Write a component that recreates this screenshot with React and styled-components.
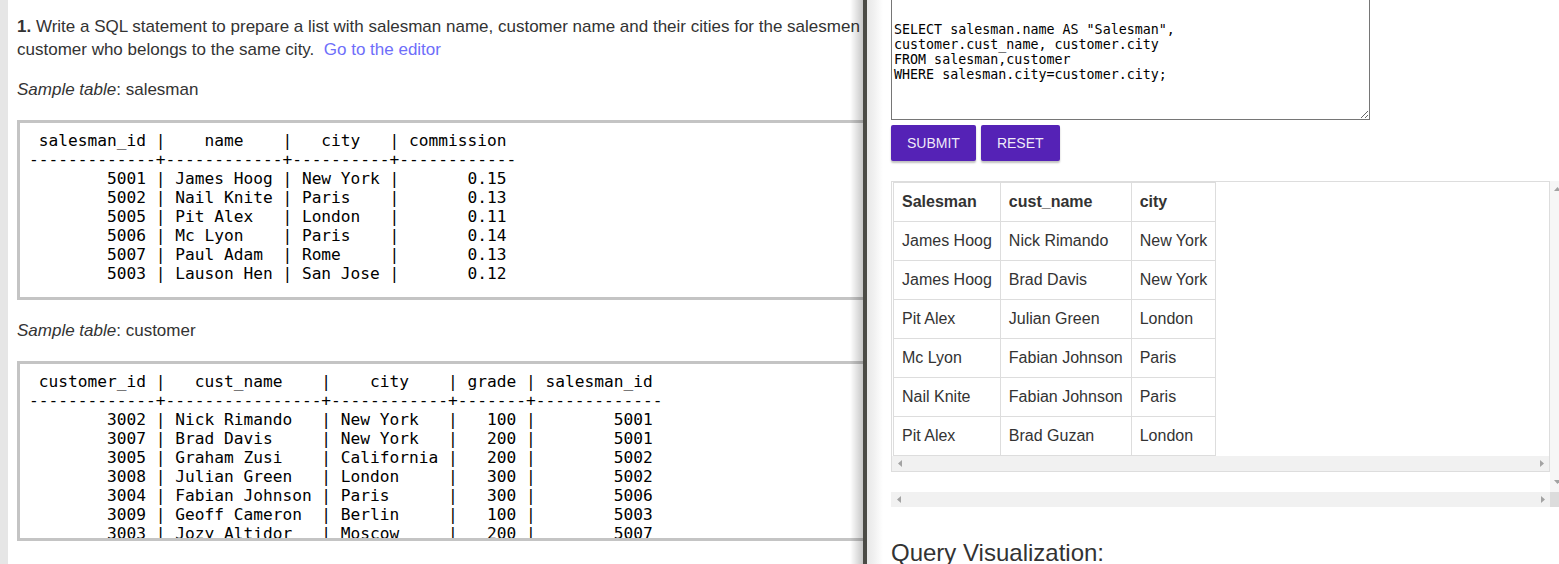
import React from 'react'
import styled, { createGlobalStyle } from 'styled-components'

const GlobalStyle = createGlobalStyle`
  html, body {
    margin: 0;
    padding: 0;
    height: 100%;
    overflow: hidden;
  }
  body {
    background: #e6e6e6;
    font-family: "Liberation Sans", Arial, sans-serif;
  }
`

const salesmanTable = ` salesman_id |    name    |   city   | commission
-------------+------------+----------+------------
        5001 | James Hoog | New York |       0.15
        5002 | Nail Knite | Paris    |       0.13
        5005 | Pit Alex   | London   |       0.11
        5006 | Mc Lyon    | Paris    |       0.14
        5007 | Paul Adam  | Rome     |       0.13
        5003 | Lauson Hen | San Jose |       0.12`

const customerTable = ` customer_id |   cust_name    |    city    | grade | salesman_id
-------------+----------------+------------+-------+-------------
        3002 | Nick Rimando   | New York   |   100 |        5001
        3007 | Brad Davis     | New York   |   200 |        5001
        3005 | Graham Zusi    | California |   200 |        5002
        3008 | Julian Green   | London     |   300 |        5002
        3004 | Fabian Johnson | Paris      |   300 |        5006
        3009 | Geoff Cameron  | Berlin     |   100 |        5003
        3003 | Jozy Altidor   | Moscow     |   200 |        5007
        3001 | Brad Guzan     | London     |       |        5005`

const query = `SELECT salesman.name AS "Salesman",
customer.cust_name, customer.city
FROM salesman,customer
WHERE salesman.city=customer.city;`

const columns = ['Salesman', 'cust_name', 'city']
const rows = [
    ['James Hoog', 'Nick Rimando', 'New York'],
    ['James Hoog', 'Brad Davis', 'New York'],
    ['Pit Alex', 'Julian Green', 'London'],
    ['Mc Lyon', 'Fabian Johnson', 'Paris'],
    ['Nail Knite', 'Fabian Johnson', 'Paris'],
    ['Pit Alex', 'Brad Guzan', 'London'],
]

// little grey scrollbar arrows
const Arrow = ({ dir }) => {
    const shapes = {
        left: { w: 4, h: 7, pts: '4,0 0,3.5 4,7' },
        right: { w: 4, h: 7, pts: '0,0 4,3.5 0,7' },
        up: { w: 7, h: 4, pts: '0,4 3.5,0 7,4' },
        down: { w: 7, h: 4, pts: '0,0 7,0 3.5,4' },
    }
    const s = shapes[dir]
    return (
        <svg width={s.w} height={s.h} viewBox={`0 0 ${s.w} ${s.h}`}>
            <polygon points={s.pts} fill="#a3a3a3" />
        </svg>
    )
}

function App() {
    return (
        <>
            <GlobalStyle />
            <Page>
                <LeftPanel>
                    <Column>
                        <Intro>
                            <b>1.</b> Write a SQL statement to prepare a list with salesman name, customer name and their cities for the salesmen customer who belongs to the same city.{'\u00a0 '}
                            <Link href="#editor">Go to the editor</Link>
                        </Intro>
                        <Para><i>Sample table</i>: salesman</Para>
                        <Sample>{salesmanTable}</Sample>
                        <Para><i>Sample table</i>: customer</Para>
                        <Sample>{customerTable}</Sample>
                    </Column>
                </LeftPanel>
                <Splitter />
                <RightPanel>
                    <Editor defaultValue={query} />
                    <Actions>
                        <Button>Submit</Button>
                        <Button>Reset</Button>
                    </Actions>
                    <ResultFrame>
                        <ResultArea>
                            <ResultBox>
                                <Result>
                                    <thead>
                                        <tr>
                                            {columns.map(c => <th key={c}>{c}</th>)}
                                        </tr>
                                    </thead>
                                    <tbody>
                                        {rows.map((r, i) => (
                                            <tr key={i}>
                                                {r.map((v, j) => <td key={j}>{v}</td>)}
                                            </tr>
                                        ))}
                                    </tbody>
                                </Result>
                                <HTrack>
                                    <Arrow dir="left" />
                                    <Arrow dir="right" />
                                </HTrack>
                            </ResultBox>
                        </ResultArea>
                        <VTrack>
                            <Arrow dir="up" />
                            <Arrow dir="down" />
                        </VTrack>
                        <HTrack>
                            <Arrow dir="left" />
                            <Arrow dir="right" />
                        </HTrack>
                        <Corner />
                    </ResultFrame>
                    <Heading>Query Visualization:</Heading>
                </RightPanel>
            </Page>
        </>
    )
}

const Page = styled.div`
    display: flex;
    width: 100vw;
    height: 100vh;
    padding-left: 8px;
    box-sizing: border-box;
    overflow: hidden;
`

const LeftPanel = styled.section`
    position: relative;
    flex: 0 0 855px;
    padding: 15px 0 0 9px;
    box-sizing: border-box;
    background: #fff;
    overflow: hidden;
    &::after {
        content: '';
        position: absolute;
        top: 0;
        right: 0;
        bottom: 0;
        width: 13px;
        background: linear-gradient(to right, rgba(0,0,0,0), rgba(0,0,0,.22));
        pointer-events: none;
    }
`

const Column = styled.div`
    width: 853px;
    color: #333;
    font-size: 17px;
    line-height: 23px;
`

const Intro = styled.p`
    margin: 0 0 17px;
`

const Para = styled.p`
    margin: 0 0 19px;
`

const Link = styled.a`
    color: #6e6efa;
    text-decoration: none;
`

const Sample = styled.pre`
    margin: 0 0 19px;
    height: 180px;
    box-sizing: border-box;
    padding: 8px 9px;
    border: 3px solid #c4c4c4;
    background: #fff;
    overflow: hidden;
    color: #000;
    font-family: "DejaVu Sans Mono", monospace;
    font-size: 16.2px;
    line-height: 19px;
`

const Splitter = styled.div`
    flex: 0 0 4px;
    background: #4b4b46;
`

const RightPanel = styled.section`
    flex: 1;
    min-width: 0;
    padding-left: 24px;
    background: linear-gradient(to right, #e8e8e8 0, #efefef 6px, #fff 16px);
    overflow: hidden;
`

const Editor = styled.textarea`
    display: block;
    width: 479px;
    height: 121px;
    margin: -1px 0 0;
    padding: 22px 2px 2px;
    box-sizing: border-box;
    border: 1px solid #767676;
    border-radius: 0;
    color: #000;
    font-family: "DejaVu Sans Mono", monospace;
    font-size: 13.33px;
    line-height: 15px;
`

const Actions = styled.div`
    display: flex;
    gap: 5px;
    margin-top: 5px;
`

const Button = styled.button`
    height: 36px;
    padding: 0 16px;
    border: none;
    border-radius: 2px;
    background: #5522b6;
    color: rgba(255,255,255,.92);
    font-family: "Liberation Sans", Arial, sans-serif;
    font-size: 14px;
    text-transform: uppercase;
    box-shadow: 0 2px 2px rgba(0,0,0,.25);
`

const ResultFrame = styled.div`
    display: grid;
    grid-template-columns: 659px 15px;
    grid-template-rows: 311px 15px;
    width: 674px;
    margin-top: 20px;
`

const ResultArea = styled.div`
    background: #fff;
`

const ResultBox = styled.div`
    border: 1px solid #ddd;
`

const Result = styled.table`
    border-collapse: collapse;
    margin-left: 1px;
    color: #333;
    font-size: 16px;
    line-height: 22px;
    th, td {
        padding: 8px;
        border: 1px solid #ddd;
        text-align: left;
        white-space: nowrap;
    }
    th {
        font-weight: 700;
    }
`

const HTrack = styled.div`
    display: flex;
    align-items: center;
    justify-content: space-between;
    height: 15px;
    padding: 0 5px 0 6px;
    background: #f1f1f1;
`

const VTrack = styled.div`
    display: flex;
    flex-direction: column;
    align-items: center;
    justify-content: space-between;
    padding: 6px 0 8px;
    background: #f6f6f6;
`

const Corner = styled.div`
    background: #dcdcdc;
`

const Heading = styled.h3`
    margin: 33px 0 0;
    color: #333;
    font-size: 24px;
    font-weight: 400;
    line-height: 1.1;
`

export default App
